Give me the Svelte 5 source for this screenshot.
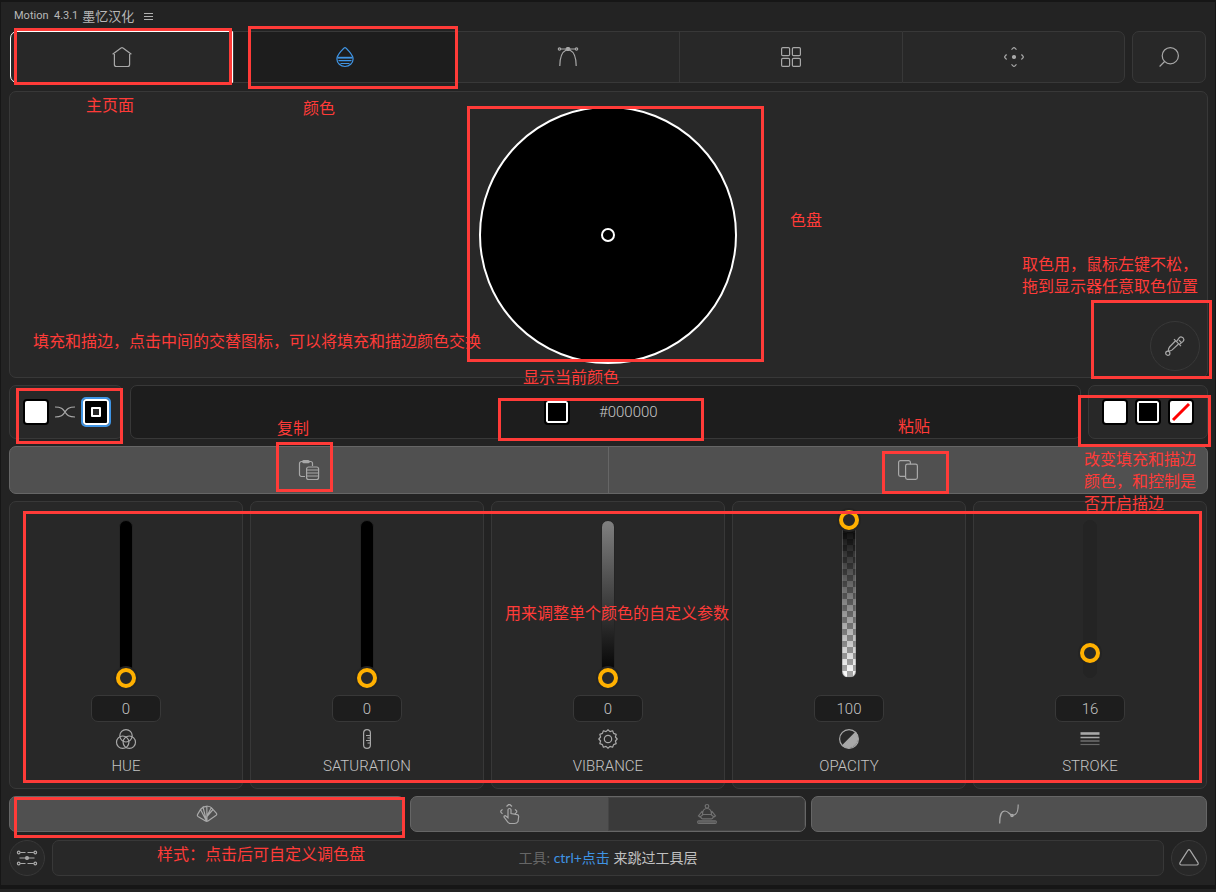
<script>
  let hex = $state('#000000');
  let activeTab = $state('color');

  const tabs = [
    { id: 'home', label: '主页面' },
    { id: 'color', label: '颜色' },
    { id: 'curve', label: 'Curve' },
    { id: 'grid', label: 'Grid' },
    { id: 'move', label: 'Move' }
  ];

  let sliders = $state([
    { id: 'hue', label: 'HUE', value: 0 },
    { id: 'saturation', label: 'SATURATION', value: 0 },
    { id: 'vibrance', label: 'VIBRANCE', value: 0 },
    { id: 'opacity', label: 'OPACITY', value: 100 },
    { id: 'stroke', label: 'STROKE', value: 16 }
  ]);

  // Callout frames: left, top, width, height
  const frames = [
    [14, 28, 218, 57],
    [248, 26, 210, 63],
    [467, 106, 297, 256],
    [1091, 300, 121, 79],
    [16, 388, 107, 56],
    [498, 398, 206, 43],
    [1078, 395, 133, 52],
    [276, 442, 57, 50],
    [882, 451, 67, 43],
    [23, 511, 1179, 272],
    [14, 797, 391, 41]
  ];

  // Callout notes: left, top, lines
  const notes = [
    [86, 95, ['主页面']],
    [303, 98, ['颜色']],
    [790, 210, ['色盘']],
    [1022, 254, ['取色用，鼠标左键不松，', '拖到显示器任意取色位置']],
    [33, 331, ['填充和描边，点击中间的交替图标，可以将填充和描边颜色交换']],
    [523, 367, ['显示当前颜色']],
    [277, 418, ['复制']],
    [898, 416, ['粘贴']],
    [1084, 449, ['改变填充和描边', '颜色，和控制是', '否开启描边']],
    [505, 603, ['用来调整单个颜色的自定义参数']],
    [157, 844, ['样式：点击后可自定义调色盘']]
  ];
</script>

{#snippet icon(name)}
  <svg class="icon" viewBox="0 0 20 20" aria-hidden="true">
    {#if name === 'home'}
      <path d="M.6 7.2 9 1.1q1-.8 2 0l8.400 6.100M2.400 7v10.500a2 2 0 0 0 2 2h11.200a2 2 0 0 0 2-2V7" />
    {:else if name === 'color'}
      <path d="M10 .6C9.200.6 1.900 7.700 1.900 12a8.100 7.500 0 0 0 16.200 0C18.100 7.700 10.800.6 10 .6Z" />
      <path d="M2.500 10.700h15" stroke-width="1.800" /><path d="M3.500 13.600h13M5.500 16.500h9" />
    {:else if name === 'curve'}
      <path d="M1.800 19C1.800 10 4 5 8.200 3M18.200 19c0-9-2.200-14-6.400-16M2.700 2h5.500M11.800 2h5.500" />
      <circle cx="1.500" cy="2" r="1.200" /><circle cx="18.500" cy="2" r="1.200" />
      <rect x="8.300" y=".7" width="3.400" height="2.800" rx="1" class="solid" />
    {:else if name === 'grid'}
      <rect x=".6" y=".6" width="8" height="8" rx="1.200" /><rect x="11.400" y=".6" width="8" height="8" rx="1.200" />
      <rect x=".6" y="11.400" width="8" height="8" rx="1.200" /><rect x="11.400" y="11.400" width="8" height="8" rx="1.200" />
    {:else if name === 'move'}
      <circle cx="10" cy="10" r="1.500" class="solid" />
      <path d="M7.500 2.600C9 1.300 9.200.6 10 .6s1 .7 2.500 2M7.500 17.400c1.500 1.300 1.700 2 2.500 2s1-.7 2.500-2M2.600 7.500C1.300 9 .6 9.200.6 10s.7 1 2 2.500M17.400 7.500c1.300 1.500 2 1.700 2 2.500s-.7 1-2 2.500" />
    {:else if name === 'search'}
      <circle cx="11.300" cy="8.700" r="8.100" /><path d="m5.600 14.500-5 5" />
    {:else if name === 'dropper'}
      <path d="M10.300 5 4.500 11q-1.200 1.400-1.200 4 2.600 0 3.900-1.100L13.200 8.200M9 3.200l7 7M11.800 5.200l2.500-3.600q1.500-1.400 3.200-.2l.8.800q1.300 1.600-.2 3.200L14.600 8.200" />
      <circle cx="2.800" cy="17.200" r="2.100" /><path d="M14 4.200l2.300 2.300" />
    {:else if name === 'swap'}
      <path d="M0 5c7.500 0 8 2.500 10 5s2.500 5 10 5M0 15c7.500 0 8-2.500 10-5s2.500-5 10-5" />
    {:else if name === 'paste'}
      <path d="M6 16.500H2.500a2 2 0 0 1-2-2v-11a2 2 0 0 1 2-2h9a2 2 0 0 1 2 2V6" />
      <rect x="3.800" y=".5" width="6.400" height="2.200" rx="1" />
      <rect x="7.600" y="7" width="12" height="12.500" rx="2" /><path d="M8 10h11M8 13h11M8 16h11" />
    {:else if name === 'copy'}
      <path d="M7 16.400H2.400a1.800 1.800 0 0 1-1.800-1.800V2.400A1.800 1.800 0 0 1 2.400.6h8.200a1.800 1.800 0 0 1 1.800 1.800v1.800" />
      <rect x="7.600" y="4.200" width="11.800" height="15.200" rx="1.800" />
    {:else if name === 'hue'}
      <circle cx="10" cy="6.800" r="6.200" /><circle cx="6.700" cy="13.200" r="6.200" /><circle cx="13.300" cy="13.200" r="6.200" />
    {:else if name === 'saturation'}
      <rect x="6.600" y=".6" width="6.800" height="18.800" rx="3.400" /><path d="M9 6.500h4M10.500 9h2.500M9 11.500h4M10.500 14h2.500" />
    {:else if name === 'vibrance'}
      <path d="M10 .8 12 2.600 14.600 1.800 15.600 4.400 18.200 5.400 17.400 8 19.200 10 17.400 12 18.200 14.600 15.600 15.600 14.600 18.200 12 17.400 10 19.200 8 17.400 5.400 18.200 4.400 15.600 1.800 14.600 2.600 12 .8 10 2.600 8 1.800 5.400 4.400 4.400 5.400 1.800 8 2.600Z" stroke-linejoin="round" />
      <circle cx="10" cy="10" r="3.700" />
    {:else if name === 'opacity'}
      <circle cx="10" cy="10" r="9.400" /><path d="M16.600 3.400A9.400 9.400 0 0 1 3.400 16.600Z" class="solid" />
    {:else if name === 'stroke'}
      <path d="M.5 4.500h19" stroke-width="2.600" /><path d="M.5 8.500h19" stroke-width="1.500" />
      <path d="M.5 12h19" opacity=".7" /><path d="M.5 15.500h19" opacity=".5" />
    {:else if name === 'fan'}
      <path d="M8.500 17 1 12.500q-1-.8-.5-1.900L3.500 5.500 9.500 17ZM3.500 5.500 6 3.200 9.500 17M6 3.200l3.800-.9.200 14.500M9.800 2.300q3-.3 4.500 1.400L9.500 13M14.300 3.700l5.200 5.600q.7 1.200-.3 2L11 17q-1.200.7-2.500 0M9.500 13 16 5.500" />
    {:else if name === 'tap'}
      <path d="M8 13.800 5.500 11.700q-1.600-.2-1.500 1.300L8 18.400q1 1.100 2.500 1.100h4q2.500 0 3.500-2l.7-5q0-1.500-1.500-1.800L11 9.500V5.700q-.2-1.200-1.500-1.200T8 5.700ZM6.500 2.500 8.500.7h1.500l2 1.800M2.500 5.300.8 7.100v1l1.700 1.800M15 5.300l1.700 1.800v1L15 9.900" />
    {:else if name === 'bell'}
      <circle cx="10" cy="2.300" r="1.800" />
      <path d="M5.500 10.500q0-6 4.500-6t4.500 6M5.300 7 1.500 11.800 3 13l3-2.500h8l3 2.500 1.500-1.200L14.700 7M4 13q0 1.800 1.500 1.800h9q1.500 0 1.500-1.800" />
      <rect x=".7" y="16.800" width="18.600" height="2.500" rx="1" /><path d="M2 18h16" />
    {:else if name === 'path'}
      <path d="M.7 19.500C.7 11 2 7 6 7c3.500 0 5 4.300 7.200 4.300 4 0 6-2.300 6-10.800" />
      <circle cx="13" cy="11.500" r="1.200" />
    {:else if name === 'settings'}
      <path d="M3.200 4.500h5.300M10.500 4.500h6.300M3.200 15.500h5.300M10.500 15.500h6.300M2.500 10h5.700M11.800 10h5.700" />
      <circle cx="1.700" cy="4.500" r="1.300" /><circle cx="18.300" cy="4.500" r="1.300" /><circle cx="1.700" cy="15.500" r="1.300" />
      <circle cx="18.300" cy="15.500" r="1.300" /><circle cx="10" cy="10" r="1.500" class="solid" />
    {:else if name === 'triangle'}
      <path d="M8.700 2.600q1.300-1.800 2.600 0l7.700 12q.8 2.200-1.400 2.400H2.400Q.2 16.800 1 14.600Z" />
    {/if}
  </svg>
{/snippet}

<div class="panel">
  <header>
    <span>Motion&nbsp; 4.3.1</span>
    <span class="title-cn">墨忆汉化</span>
    <button class="menu" aria-label="Menu"><i></i><i></i><i></i></button>
  </header>

  <main>
    <nav class="tab-row">
      <div class="tabs">
        {#each tabs as tab}
          <button
            class="tab"
            class:active={activeTab === tab.id}
            class:ring={tab.id === 'home'}
            aria-label={tab.label}
            onclick={() => (activeTab = tab.id)}
          >
            {@render icon(tab.id)}
          </button>
        {/each}
      </div>
      <button class="card search" aria-label="Search">{@render icon('search')}</button>
    </nav>

    <section class="card wheel-area">
      <div class="wheel"><span class="wheel-dot"></span></div>
      <button class="round dropper" aria-label="Pick color">{@render icon('dropper')}</button>
    </section>

    <section class="swatch-row">
      <div class="card fill-stroke">
        <button class="swatch white" aria-label="Fill"></button>
        <button class="swap" aria-label="Swap">{@render icon('swap')}</button>
        <button class="stroke-swatch" aria-label="Stroke"><span></span></button>
      </div>
      <div class="card hex">
        <span class="swatch black"></span>
        <input bind:value={hex} aria-label="Hex color" />
      </div>
      <div class="card presets">
        <button class="swatch white" aria-label="White"></button>
        <button class="swatch black" aria-label="Black"></button>
        <button class="swatch white" aria-label="None">
          <svg viewBox="0 0 22 22" aria-hidden="true"><path d="M3 19 19 3" stroke="#f00" stroke-width="3" /></svg>
        </button>
      </div>
    </section>

    <section class="actions raised">
      <button aria-label="复制">{@render icon('paste')}</button>
      <button aria-label="粘贴">{@render icon('copy')}</button>
    </section>

    <section class="sliders">
      {#each sliders as s}
        <div class="card slider-card">
          <div class="slider">
            <span class="track {s.id}"></span>
            <input id={s.id} type="range" min="0" max="100" bind:value={s.value} />
          </div>
          <input class="value" bind:value={s.value} aria-label="{s.label} value" />
          {@render icon(s.id)}
          <label for={s.id}>{s.label}</label>
        </div>
      {/each}
    </section>

    <section class="tools">
      <div class="raised"><button aria-label="样式">{@render icon('fan')}</button></div>
      <div class="raised">
        <button aria-label="Tap">{@render icon('tap')}</button>
        <button class="dim" aria-label="Service">{@render icon('bell')}</button>
      </div>
      <div class="raised"><button aria-label="Path">{@render icon('path')}</button></div>
    </section>

    <footer>
      <button class="round" aria-label="Settings">{@render icon('settings')}</button>
      <p class="card"><span class="muted">工具:</span>&nbsp;<span class="key">ctrl+点击</span>&nbsp;来跳过工具层</p>
      <button class="round" aria-label="Collapse">{@render icon('triangle')}</button>
    </footer>
  </main>

  {#each frames as [x, y, w, h]}
    <div class="frame" style="left:{x}px;top:{y}px;width:{w}px;height:{h}px"></div>
  {/each}
  {#each notes as [x, y, lines]}
    <div class="note" style="left:{x}px;top:{y}px">
      {#each lines as line}<div>{line}</div>{/each}
    </div>
  {/each}
</div>

<style>
  :global(body) {
    margin: 0;
    background: #232323;
  }
  .panel,
  .panel * {
    box-sizing: border-box;
  }
  .panel {
    position: relative;
    border: solid #161616;
    border-width: 2px 1px 4px;
    background: #232323;
    color: #a8a8a8;
    font: 14px/20px Lato, 'Noto Sans CJK SC', sans-serif;
  }
  button,
  input {
    margin: 0;
    padding: 0;
    border: 0;
    background: none;
    color: inherit;
    font: inherit;
  }
  button {
    display: flex;
    align-items: center;
    justify-content: center;
  }
  .icon {
    display: block;
    flex: none;
    width: 20px;
    height: 20px;
    fill: none;
    stroke: currentColor;
    stroke-width: 1.2;
    overflow: visible;
  }
  .icon .solid {
    fill: currentColor;
  }
  header {
    display: flex;
    align-items: center;
    gap: 4px;
    height: 29px;
    padding: 0 0 2px 13px;
    color: #b8b8b8;
    font: 11px/16px Roboto, sans-serif;
  }
  .title-cn {
    font: 13px/16px 'Noto Sans CJK SC', sans-serif;
  }
  .menu {
    flex-direction: column;
    gap: 2px;
    margin: 2px 0 0 6px;
  }
  .menu i {
    width: 9px;
    height: 1px;
    background: #b0b0b0;
  }
  main {
    display: flex;
    flex-direction: column;
    gap: 7px;
    padding: 0 7px 9px 8px;
  }
  .card {
    border: 1px solid #383838;
    border-radius: 7px;
    background: #282828;
  }
  .tab-row {
    display: flex;
    gap: 7px;
    height: 52px;
    margin: 0 2px 1px 1px;
  }
  .tabs {
    display: grid;
    flex: 1;
    grid-template-columns: repeat(5, 1fr);
  }
  .tab {
    border: solid #383838;
    border-width: 1px 0 1px 1px;
    background: #282828;
  }
  .tab:last-child {
    border-right-width: 1px;
    border-radius: 0 7px 7px 0;
  }
  .tab.active {
    background: #1d1d1d;
    color: #3f94e4;
  }
  .tab.ring {
    border: 1px solid #fff;
    border-radius: 7px 0 0 7px;
  }
  .search {
    width: 74px;
  }
  .wheel-area {
    position: relative;
    display: grid;
    place-items: center;
    height: 287px;
    padding-right: 1px;
  }
  .wheel {
    display: grid;
    place-items: center;
    width: 258px;
    height: 258px;
    border: 2px solid #fff;
    border-radius: 50%;
    background: #000;
  }
  .wheel-dot {
    width: 14px;
    height: 14px;
    border: 2px solid #fff;
    border-radius: 50%;
  }
  .round {
    flex: none;
    width: 36px;
    height: 36px;
    border: 1px solid #383838;
    border-radius: 50%;
    background: #282828;
  }
  .dropper {
    position: absolute;
    right: 7px;
    bottom: 6px;
    width: 50px;
    height: 50px;
  }
  .swatch-row {
    display: grid;
    grid-template-columns: 114px 1fr 120px;
    gap: 7px;
    height: 54px;
  }
  .swatch-row .card {
    display: flex;
    align-items: center;
    justify-content: center;
    gap: 7px;
  }
  .swatch-row .fill-stroke {
    gap: 6px;
    padding-left: 2px;
  }
  .swatch {
    width: 26px;
    height: 26px;
    border: 2px solid #000;
    border-radius: 4px;
  }
  .swatch svg {
    width: 22px;
    height: 22px;
  }
  .white {
    background: #fff;
  }
  .black {
    background: #000;
    box-shadow: inset 0 0 0 2px #fff;
  }
  .stroke-swatch {
    width: 30px;
    height: 30px;
    border: 2px solid #3f94e4;
    border-radius: 5px;
    background: #000;
    box-shadow: inset 0 0 0 2px #fff;
  }
  .stroke-swatch span {
    width: 10px;
    height: 10px;
    border: 2px solid #fff;
    border-radius: 1px;
    background: #282828;
  }
  .swatch-row .hex {
    gap: 29px;
    background: #1d1d1d;
  }
  .hex input,
  .value,
  .slider-card label {
    color: #c4c4c4;
    font: 300 15px/20px Roboto, sans-serif;
  }
  .hex input {
    width: 68px;
  }
  .raised {
    display: grid;
    grid-auto-columns: 1fr;
    grid-auto-flow: column;
    overflow: hidden;
    border: 1px solid #666;
    border-radius: 7px;
    background: #505050;
  }
  .actions {
    height: 48px;
  }
  .actions button:first-child {
    border-right: 1px solid #666;
  }
  .sliders {
    display: grid;
    grid-template-columns: repeat(5, 1fr);
    gap: 7px;
    margin-right: 1px;
  }
  .slider-card {
    display: flex;
    flex-direction: column;
    align-items: center;
    gap: 7px;
    padding: 8px 0 12px;
  }
  .slider {
    display: grid;
    place-items: center;
    height: 178px;
  }
  .slider > * {
    grid-area: 1 / 1;
  }
  .track {
    width: 14px;
    height: 158px;
    border: 1px solid #242424;
    border-radius: 7px;
    background: #000;
  }
  .track.vibrance {
    background: linear-gradient(#808080, #000);
  }
  .track.opacity {
    border-color: #8886;
    background:
      linear-gradient(#000, transparent),
      repeating-conic-gradient(#aaa 0 25%, #fff 0 50%) 4px 0 / 12px 12px;
  }
  .track.stroke {
    background: #242424;
  }
  input[type='range'] {
    appearance: none;
    width: 20px;
    height: 178px;
    writing-mode: vertical-lr;
    direction: rtl;
  }
  input[type='range']::-webkit-slider-thumb {
    appearance: none;
    width: 20px;
    height: 20px;
    border: 4px solid #ffb000;
    border-radius: 50%;
    background: #282828;
    box-shadow: 0 0 0 2px #242424;
  }
  .value {
    width: 70px;
    height: 27px;
    border: 1px solid #383838;
    border-radius: 7px;
    background: #1d1d1d;
    text-align: center;
  }
  .tools {
    display: grid;
    grid-template-columns: repeat(3, 1fr);
    gap: 5px;
    height: 36px;
    margin: 0 1px 1px 0;
  }
  .raised .dim {
    background: #3a3a3a;
    box-shadow: inset 0 0 0 1px #454545;
    color: #707070;
  }
  footer {
    display: flex;
    gap: 7px;
    margin-right: 1px;
  }
  footer p {
    display: flex;
    flex: 1;
    align-items: center;
    justify-content: center;
    margin: 0;
    color: #c0c0c0;
  }
  .muted {
    color: #666;
  }
  .key {
    color: #3f94e4;
  }
  .frame {
    position: absolute;
    margin: -2px 0 0 -1px;
    border: 3px solid #ff3b38;
    pointer-events: none;
  }
  .note {
    position: absolute;
    margin: -4px 0 0 -1px;
    color: #ff3b38;
    font: 400 16px/22px 'Noto Sans CJK SC', sans-serif;
    white-space: nowrap;
    pointer-events: none;
  }
</style>
